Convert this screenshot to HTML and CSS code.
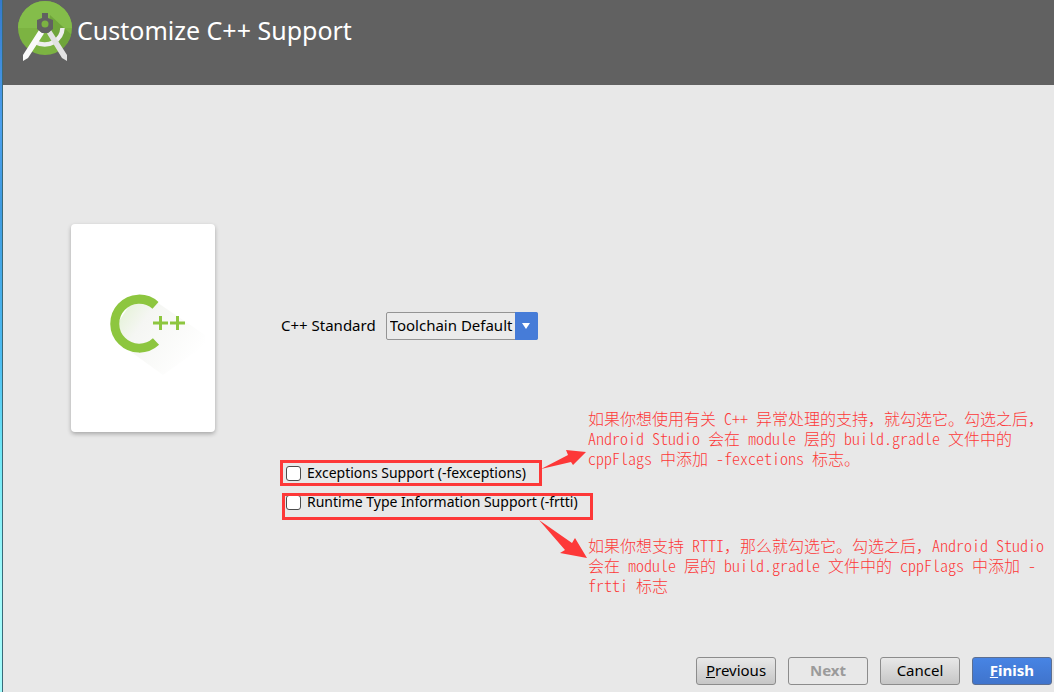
FILE: index.html
```html
<!DOCTYPE html>
<html lang="en">
<head>
<meta charset="utf-8">
<title>Customize C++ Support</title>
<link rel="stylesheet" href="styles.css">
</head>
<body>
<div class="wizard">
  <header class="header">
    <svg class="logo" viewBox="0 0 56 64" aria-hidden="true">
      <defs><clipPath id="disc"><circle cx="28" cy="28" r="27"/></clipPath></defs>
      <circle cx="28" cy="28" r="27" fill="#7cb342"/>
      <path d="M1 28a27 27 0 0 1 54 0z" fill="#84bd4a"/>
      <path clip-path="url(#disc)" d="M33 15l24 22-12 20-9-20-4-12z" fill="#6fa53b"/>
      <path d="M18 42q10 5 19 0 8-5 8.500-14" fill="none" stroke="#eeeeee" stroke-width="4.500"/>
      <path d="M22 30q2 3 5 3.500L11 58l-5 3v-6z" fill="#fafafa"/>
      <path d="M34 30q-2 3-4 3.500l15 24.500 5 3v-6z" fill="#e2e2e2"/>
      <path d="M25 13h6v5l5 2v9l-5 4h-6l-5-4v-9l5-2z" fill="#616161"/>
      <circle cx="28" cy="24" r="3.500" fill="#7cb342"/>
    </svg>
    <h1 class="title">Customize C++ Support</h1>
  </header>

  <main class="content">
    <div class="card">
      <svg class="cpp" viewBox="0 0 96 84" role="img" aria-label="C++">
        <defs>
          <linearGradient id="shade" x1="0" y1="0" x2="1" y2="0.6">
            <stop offset="0" stop-color="#e0f1cf"/>
            <stop offset="0.35" stop-color="#f5f6f3"/>
            <stop offset="1" stop-color="#ffffff"/>
          </linearGradient>
        </defs>
        <path d="M49 9L96 41v10L54 81 18 55 8 30 24 6z" fill="url(#shade)"/>
        <path d="M46.500 11.300A24.500 24.500 0 1 0 47 47.500" fill="none" stroke="#8dc63f" stroke-width="9"/>
        <path d="M44 29h15M51.500 22v14M61 29h15M68.500 22v14" fill="none" stroke="#8dc63f" stroke-width="3"/>
      </svg>
    </div>
    <form class="form">
      <div class="row">
        <label for="standard">C++ Standard</label>
        <div class="combo">
          <select id="standard"><option>Toolchain Default</option></select>
          <svg class="combo-arrow" viewBox="0 0 23 28" aria-hidden="true"><path d="M7 11h8l-4 6z" fill="#ffffff"/></svg>
        </div>
      </div>
      <div class="checks">
        <label class="check"><input type="checkbox"><span>Exceptions Support (-fexceptions)</span></label>
        <label class="check"><input type="checkbox"><span>Runtime Type Information Support (-frtti)</span></label>
      </div>
    </form>
  </main>

  <footer class="footer">
    <button type="button" class="button"><u>P</u>revious</button>
    <button type="button" class="button" disabled>Next</button>
    <button type="button" class="button">Cancel</button>
    <button type="button" class="button primary"><u>F</u>inish</button>
  </footer>
</div>

<svg class="marks" viewBox="0 0 320 110" aria-hidden="true">
  <g fill="none" stroke="#fd3838" stroke-width="3">
    <path d="M1.500 1.500h259v23H1.500z"/>
    <path d="M3.500 34.500h308v24H3.500z"/>
  </g>
  <g fill="#fd3838">
    <path d="M261 9L288 -5l-2-5 20 2-13 13-2-3z"/>
    <path d="M259 60l33 23 3-5 12 20-27-5 5-3z"/>
  </g>
</svg>
<p class="note note-exceptions" lang="zh-CN">如果你想使用有关<span class="half"> C++ </span>异常处理的支持，就勾选它。勾选之后，<br><span class="half">Android Studio </span>会在<span class="half"> module </span>层的<span class="half"> build.gradle </span>文件中的<br><span class="half">cppFlags </span>中添加<span class="half"> -fexcetions </span>标志。</p>
<p class="note note-rtti" lang="zh-CN">如果你想支持<span class="half"> RTTI</span>，那么就勾选它。勾选之后，<span class="half">Android Studio</span><br>会在<span class="half"> module </span>层的<span class="half"> build.gradle </span>文件中的<span class="half"> cppFlags </span>中添加<span class="half"> -</span><br><span class="half">frtti </span>标志</p>
</body>
</html>
```
FILE: styles.css
```css
* { box-sizing: border-box; }

body {
  position: relative;
  margin: 0;
  background: #e8e8e8;
  color: #000;
  font: 15px/20px "Noto Sans", sans-serif;
}

.wizard {
  display: flex;
  flex-direction: column;
  min-height: 100vh;
  padding-left: 3px;
  background: linear-gradient(90deg, transparent 2px, #3a6a78 2px) 0 0 / 3px 100% no-repeat,
    linear-gradient(#3579cb, #4ba0ee 18%, #3f9be0 30%, #4dbdf2 52%, #6ee6f6 65%, #a2fbfb 85%) 0 0 / 2px 100% no-repeat;
}

.header {
  display: flex;
  align-items: flex-start;
  height: 85px;
  padding-left: 14px;
  background: #616161;
  color: #fff;
}

.logo { width: 56px; height: 64px; }

.title {
  margin: 13px 0 0 4px;
  font-size: 25px;
  line-height: 34px;
  font-weight: 400;
}

.content {
  display: flex;
  flex: 1;
  align-items: flex-start;
  gap: 66px;
  padding: 139px 0 0 68px;
}

.card {
  width: 144px;
  height: 208px;
  padding: 70px 0 0 38px;
  border-radius: 4px;
  background: #fff;
  box-shadow: 0 2px 4px rgba(0, 0, 0, 0.28);
}

.cpp { display: block; width: 96px; height: 84px; }

.form { padding-top: 88px; }

.row { display: flex; align-items: center; gap: 10px; }

.row label { padding-bottom: 2px; }

.combo { position: relative; width: 152px; height: 28px; }

.combo select {
  appearance: none;
  width: 100%;
  height: 100%;
  padding: 0 23px 2px 3px;
  border: 1px solid #949494;
  border-radius: 2px;
  background: #ebebeb;
  color: #000;
  font: inherit;
}

.combo-arrow {
  position: absolute;
  top: 0;
  right: 0;
  width: 23px;
  height: 28px;
  border-radius: 0 2px 2px 0;
  background: #467cd8;
  pointer-events: none;
}

.checks { display: grid; gap: 9px; margin-top: 123px; padding-left: 5px; }

.check { display: flex; align-items: center; gap: 6px; font-size: 14px; }

.check input {
  appearance: none;
  width: 15px;
  height: 15px;
  margin: 0;
  border: 1px solid #4c4c4c;
  border-radius: 3px;
  background: #fff;
}

.check input:checked { background: #467cd8; }

.footer {
  display: flex;
  justify-content: flex-end;
  gap: 12px;
  padding: 0 2px 7px;
}

.button {
  width: 80px;
  height: 28px;
  padding: 0 0 2px;
  border: 1px solid #8c8c8c;
  border-radius: 3px;
  background: linear-gradient(#e8e8e8, #c6c6c6);
  color: #000;
  font: inherit;
}

.button:disabled { background: #e8e8e8; color: #9b9b9b; font-weight: 700; }

.primary {
  border-color: #5d6f91;
  background: linear-gradient(#4784e4, #4074cc);
  color: #fff;
  font-weight: 700;
}

.marks {
  position: absolute;
  top: 460px;
  left: 280px;
  width: 320px;
  height: 110px;
  overflow: visible;
  pointer-events: none;
}

.note {
  position: absolute;
  margin: 0;
  color: #fd3838;
  font: 300 16px/20px "Noto Sans CJK SC", monospace;
  white-space: nowrap;
}

.half { font-feature-settings: "hwid"; }

.note-exceptions { top: 408px; left: 588px; }
.note-rtti { top: 535px; left: 588px; }
```
